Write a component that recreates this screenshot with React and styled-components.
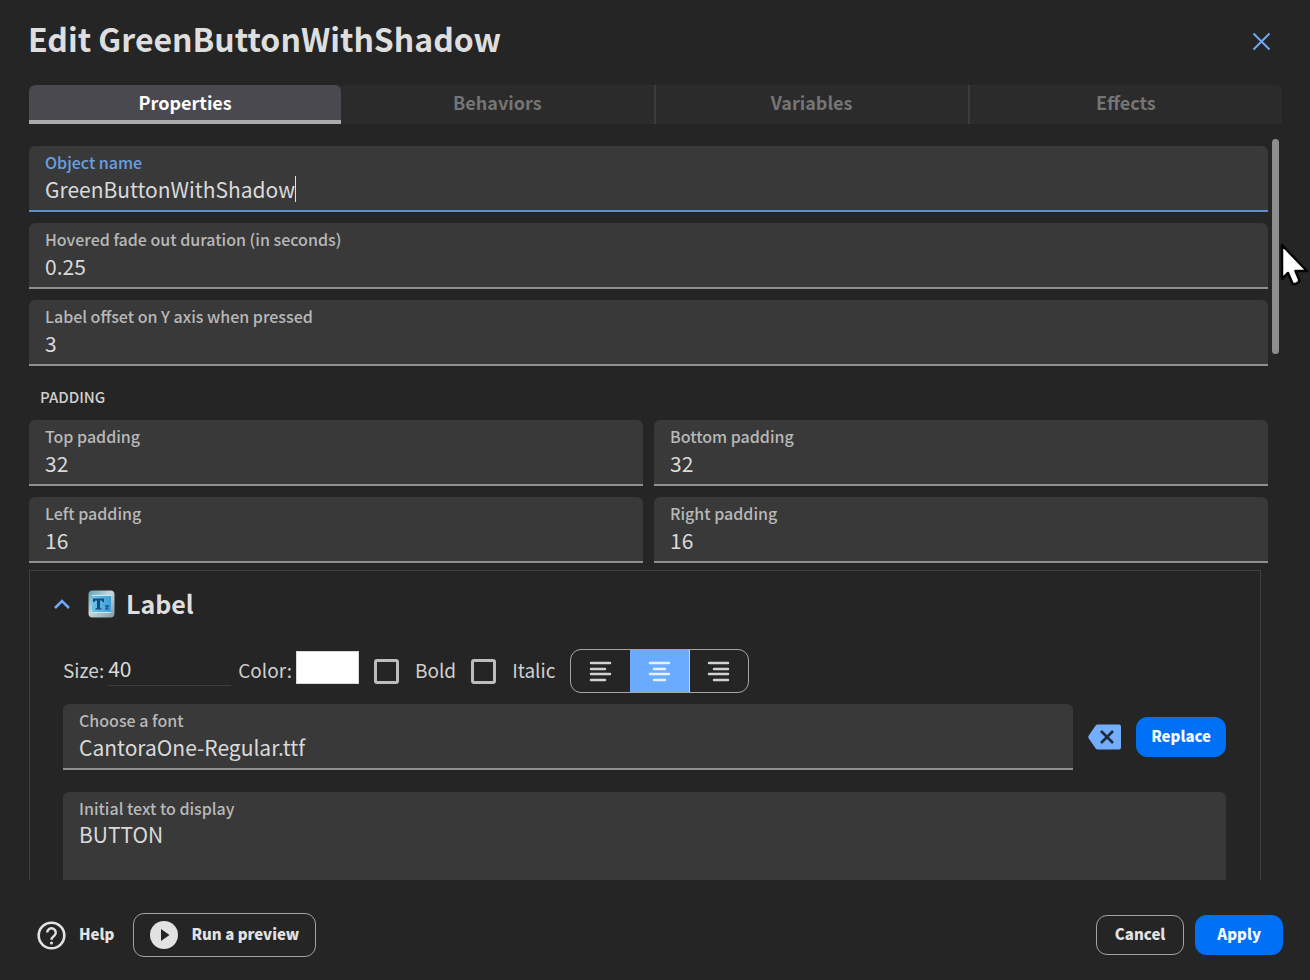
import React from 'react';
import styled, { createGlobalStyle, css } from 'styled-components';

const GlobalStyle = createGlobalStyle`
  *, *::before, *::after { box-sizing: border-box; }
  body { margin: 0; background: #252525; }
  body, button, input, textarea {
    font-family: "Noto Sans CJK SC", "Open Sans", sans-serif;
  }
`;

const Dialog = styled.main`
  display: flex;
  flex-direction: column;
  height: 100vh;
  background: #252525;
  color: #d9d9d9;
  overflow: hidden;
`;

const Header = styled.header`
  display: flex;
  align-items: center;
  justify-content: space-between;
  flex: none;
  height: 85px;
  padding: 0 36px 3px 28px;
`;

const Title = styled.h1`
  margin: 0;
  padding-bottom: 6px;
  font-size: 32px;
  line-height: 40px;
  font-weight: 700;
  color: #dedede;
`;

const CloseButton = styled.button`
  display: flex;
  padding: 0;
  border: 0;
  background: none;
  color: #6fa8f5;
`;

const Tabs = styled.div`
  display: flex;
  flex: none;
  height: 39px;
  margin: 0 28px 0 29px;
  border-radius: 6px 6px 0 0;
  overflow: hidden;
  background: #2b2b2b;
`;

const Tab = styled.button`
  flex: 1;
  padding: 0 0 5px;
  border: 0;
  border-right: 2px solid #3c3c3c;
  background: none;
  color: #757575;
  font-size: 18px;
  line-height: 24px;
  font-weight: 700;
  &:last-child { border-right: 0; }
  ${(p) => p.$active && css`
    padding-bottom: 1px;
    border-right: 0;
    border-bottom: 4px solid #acabac;
    border-radius: 6px 6px 0 0;
    background: #4a494f;
    color: #fff;
  `}
`;

const Body = styled.div`
  display: flex;
  flex: 1;
  gap: 4px;
  min-height: 0;
  margin: 15px 31px 0 29px;
`;

const Content = styled.div`
  display: flex;
  flex-direction: column;
  flex: 1;
  min-width: 0;
  overflow: hidden;
  padding-top: 7px;
`;

const ScrollThumb = styled.div`
  flex: none;
  width: 7px;
  height: 29%;
  border-radius: 4px;
  background: #8e8e8e;
`;

const Fields = styled.div`
  display: grid;
  flex: none;
  grid-template-columns: repeat(${(p) => p.$columns || 1}, 1fr);
  gap: 11px;
`;

const FieldBox = styled.label`
  display: flex;
  flex-direction: column;
  flex: ${(p) => (p.$multiline ? 'none' : 1)};
  min-width: 0;
  height: ${(p) => (p.$multiline ? 160 : 66)}px;
  padding: 4px 16px 0;
  border-radius: 6px 6px 0 0;
  border-bottom: 2px solid ${(p) => (p.$focused ? '#5c8fcc' : '#8f8f8f')};
  background: #393939;
`;

const FieldLabel = styled.span`
  font-size: 16px;
  line-height: 24px;
  font-weight: 500;
  color: ${(p) => (p.$focused ? '#6a9fe0' : '#b8b8b8')};
`;

const inputText = css`
  padding: 0;
  border: 0;
  outline: 0;
  background: none;
  color: #dadada;
  font-size: 21px;
  line-height: 30px;
`;

const TextInput = styled.input`
  ${inputText}
  width: 100%;
  height: 30px;
  ${(p) => p.$hug && css`
    width: auto;
    field-sizing: content;
    caret-color: transparent;
  `}
`;

const TextArea = styled.textarea`
  ${inputText}
  flex: 1;
  line-height: 28px;
  resize: none;
`;

const CaretRow = styled.span`
  display: flex;
  align-items: center;
`;

const Caret = styled.span`
  width: 1px;
  height: 26px;
  background: #e0e0e0;
`;

const SectionTitle = styled.h2`
  flex: none;
  margin: 19px 11px 11px;
  font-size: 15px;
  line-height: 24px;
  font-weight: 500;
  color: #cfcfcf;
`;

const Panel = styled.section`
  display: flex;
  flex-direction: column;
  flex: none;
  margin: 7px 7px 0 0;
  padding: 16px 34px 0 33px;
  border: 1px solid #404040;
`;

const PanelHeader = styled.div`
  display: flex;
  align-items: center;
  height: 34px;
  margin-left: -9px;
`;

const Collapse = styled.button`
  display: flex;
  padding: 0;
  border: 0;
  background: none;
  color: #6fa8f5;
`;

const PanelTitle = styled.h2`
  display: flex;
  align-items: center;
  gap: 11px;
  margin: 0 0 0 18px;
  font-size: 25px;
  line-height: 34px;
  font-weight: 700;
  color: #dedede;
`;

const FormatRow = styled.div`
  display: flex;
  align-items: center;
  height: 44px;
  margin: 28px 0 11px;
  font-size: 19px;
  line-height: 28px;
  color: #cfcfcf;
`;

const InlineLabel = styled.label`
  display: flex;
  align-items: center;
  gap: ${(p) => p.$gap || 4}px;
  height: 30px;
  margin-right: ${(p) => p.$after || 0}px;
`;

const LabelText = styled.span`
  padding-bottom: 3px;
`;

const SizeInput = styled.input`
  ${inputText}
  width: 123px;
  height: 32px;
  margin-bottom: 2px;
  padding-bottom: 4px;
  border-bottom: 1px solid #3d3d3d;
`;

const Swatch = styled.input`
  width: 63px;
  height: 33px;
  margin: 0 0 7px;
  padding: 0;
  border: 0;
  background: none;
  &::-webkit-color-swatch-wrapper { padding: 0; }
  &::-webkit-color-swatch { border: 1px solid #d8d8d8; border-radius: 0; }
`;

const Checkbox = styled.input`
  appearance: none;
  width: 25px;
  height: 25px;
  margin: 0;
  border: 3px solid #bdbdbd;
  border-radius: 3px;
`;

const AlignGroup = styled.div`
  display: flex;
  width: 179px;
  height: 44px;
  border: 1px solid #a5a5a5;
  border-radius: 11px;
  overflow: hidden;
`;

const AlignButton = styled.button`
  display: flex;
  align-items: center;
  justify-content: center;
  flex: 1;
  padding: 0;
  border: 0;
  background: ${(p) => (p.$active ? '#6aabff' : 'none')};
  color: ${(p) => (p.$active ? '#e8f1ff' : '#d2d2d2')};
  box-shadow: ${(p) => (p.$active ? '1px 0 0 #d5d5d5' : 'none')};
`;

const FontRow = styled.div`
  display: flex;
  align-items: center;
  margin-bottom: 22px;
`;

const ClearButton = styled.button`
  display: flex;
  margin: 0 15px;
  padding: 0;
  border: 0;
  background: none;
`;

const Button = styled.button`
  display: flex;
  align-items: center;
  justify-content: center;
  gap: 13px;
  height: ${(p) => (p.$large ? 44 : 40)}px;
  padding: 0 ${(p) => p.$pad || 14}px;
  border: 1px solid #a3a3a3;
  border-radius: 11px;
  background: none;
  color: #e2e2e2;
  white-space: nowrap;
  ${(p) => p.$primary && css`
    border-color: #0070f5;
    background: #0070f5;
    color: #f4f8ff;
  `}
  ${(p) => p.$plain && css`
    border-color: transparent;
  `}
`;

const ButtonText = styled.span`
  padding-bottom: 3px;
  font-size: 15px;
  line-height: 24px;
  font-weight: 900;
`;

const Footer = styled.footer`
  display: flex;
  align-items: center;
  justify-content: space-between;
  flex: none;
  height: 100px;
  padding: 10px 27px 0 29px;
`;

const Actions = styled.div`
  display: flex;
  align-items: center;
  gap: ${(p) => p.$gap}px;
`;

const Pointer = styled.svg`
  position: absolute;
  top: 242px;
  right: 0;
  pointer-events: none;
`;

function Field({ label, value, focused }) {
  return (
    <FieldBox $focused={focused}>
      <FieldLabel $focused={focused}>{label}</FieldLabel>
      {focused ? (
        <CaretRow>
          <TextInput $hug defaultValue={value} />
          <Caret />
        </CaretRow>
      ) : (
        <TextInput defaultValue={value} />
      )}
    </FieldBox>
  );
}

const alignLines = {
  left: ['M2 2h19', 'M2 8h14', 'M2 13h19', 'M2 19h14'],
  center: ['M2 2h19', 'M6 8h11', 'M2 13h19', 'M6 19h11'],
  right: ['M2 2h19', 'M7 8h14', 'M2 13h19', 'M7 19h14'],
};

function AlignIcon({ kind }) {
  return (
    <svg width="23" height="21" viewBox="0 0 23 21" fill="none" stroke="currentColor" strokeWidth="2.500" strokeLinecap="round">
      {alignLines[kind].map((d) => <path key={d} d={d} />)}
    </svg>
  );
}

function TextObjectIcon() {
  return (
    <svg width="27" height="28" viewBox="0 0 27 28">
      <defs>
        <linearGradient id="frame" x1="0" y1="0" x2="1" y2="1">
          <stop offset="0" stopColor="#5d9fb4" />
          <stop offset="0.45" stopColor="#c6d7da" />
          <stop offset="1" stopColor="#7f9ba0" />
        </linearGradient>
        <linearGradient id="face" x1="0" y1="0" x2="1" y2="0">
          <stop offset="0" stopColor="#6cc3e8" />
          <stop offset="1" stopColor="#3d9fd6" />
        </linearGradient>
      </defs>
      <rect x="0.5" y="0.5" width="26" height="27" rx="4" fill="url(#frame)" />
      <rect x="4" y="5" width="19" height="18" fill="url(#face)" />
      <path d="M4 5.500h19M4 22.500h19" stroke="#c3ecfa" />
      <path d="M5 8.500h11v3.500h-1.500l-.8-1.500h-1.700v7.500l1.500.5v1h-6v-1l1.500-.5v-7.500H7.300l-.8 1.500H5z" fill="#17497f" />
      <path d="M17 15h4v1.500l-1 .5v1.500h1v1h-4v-1l1-.5v-1.500h-1z" fill="#1f5f9c" />
    </svg>
  );
}

export default function App() {
  return (
    <Dialog>
      <GlobalStyle />
      <Header>
        <Title>Edit GreenButtonWithShadow</Title>
        <CloseButton aria-label="Close">
          <svg width="25" height="25" viewBox="0 0 25 25" fill="none" stroke="currentColor" strokeWidth="2">
            <path d="M4.500 4.500l16 16M20.500 4.500l-16 16" />
          </svg>
        </CloseButton>
      </Header>
      <Tabs role="tablist">
        <Tab role="tab" aria-selected="true" $active>Properties</Tab>
        <Tab role="tab">Behaviors</Tab>
        <Tab role="tab">Variables</Tab>
        <Tab role="tab">Effects</Tab>
      </Tabs>
      <Body>
        <Content>
          <Fields>
            <Field label="Object name" value="GreenButtonWithShadow" focused />
            <Field label="Hovered fade out duration (in seconds)" value="0.25" />
            <Field label="Label offset on Y axis when pressed" value="3" />
          </Fields>
          <SectionTitle>PADDING</SectionTitle>
          <Fields $columns={2}>
            <Field label="Top padding" value="32" />
            <Field label="Bottom padding" value="32" />
            <Field label="Left padding" value="16" />
            <Field label="Right padding" value="16" />
          </Fields>
          <Panel>
            <PanelHeader>
              <Collapse aria-label="Collapse Label">
                <svg width="16" height="12" viewBox="0 0 16 12" fill="none" stroke="currentColor" strokeWidth="2.600">
                  <path d="M1 10l7-7 7 7" />
                </svg>
              </Collapse>
              <PanelTitle><TextObjectIcon /><LabelText>Label</LabelText></PanelTitle>
            </PanelHeader>
            <FormatRow>
              <InlineLabel $after={7}><LabelText>Size:</LabelText><SizeInput defaultValue="40" /></InlineLabel>
              <InlineLabel $after={15}><LabelText>Color:</LabelText><Swatch type="color" defaultValue="#ffffff" /></InlineLabel>
              <InlineLabel $gap={16} $after={15}><Checkbox type="checkbox" /><LabelText>Bold</LabelText></InlineLabel>
              <InlineLabel $gap={16} $after={15}><Checkbox type="checkbox" /><LabelText>Italic</LabelText></InlineLabel>
              <AlignGroup>
                <AlignButton aria-label="Align left"><AlignIcon kind="left" /></AlignButton>
                <AlignButton aria-label="Align center" $active><AlignIcon kind="center" /></AlignButton>
                <AlignButton aria-label="Align right"><AlignIcon kind="right" /></AlignButton>
              </AlignGroup>
            </FormatRow>
            <FontRow>
              <Field label="Choose a font" value="CantoraOne-Regular.ttf" />
              <ClearButton aria-label="Clear font">
                <svg width="33" height="26" viewBox="0 0 33 26">
                  <path d="M10 .5h21a2 2 0 0 1 2 2v21a2 2 0 0 1-2 2H10a3 3 0 0 1-2.500-1.300L.8 14.500a2.500 2.500 0 0 1 0-3L7.500 1.800A3 3 0 0 1 10 .5z" fill="#72aefc" />
                  <path d="M13 7l12 12M25 7L13 19" stroke="#222a36" strokeWidth="2.600" />
                </svg>
              </ClearButton>
              <Button $primary><ButtonText>Replace</ButtonText></Button>
            </FontRow>
            <FieldBox $multiline>
              <FieldLabel>Initial text to display</FieldLabel>
              <TextArea defaultValue="BUTTON" />
            </FieldBox>
          </Panel>
        </Content>
        <ScrollThumb />
      </Body>
      <Footer>
        <Actions $gap={11}>
          <Button $plain $pad={7}>
            <svg width="29" height="29" viewBox="0 0 29 29" fill="none" stroke="currentColor">
              <circle cx="14.500" cy="14.500" r="12.800" strokeWidth="2.600" />
              <path d="M10.200 11.600a4.300 4.300 0 1 1 7.200 3.100c-1.600 1.400-2.900 2-2.900 4" strokeWidth="2.400" />
              <circle cx="14.500" cy="22" r="1.500" fill="currentColor" stroke="none" />
            </svg>
            <ButtonText>Help</ButtonText>
          </Button>
          <Button $large $pad={16}>
            <svg width="28" height="28" viewBox="0 0 28 28">
              <circle cx="14" cy="14" r="14" fill="currentColor" />
              <path d="M11 8v12l8.500-6z" fill="#252525" />
            </svg>
            <ButtonText>Run a preview</ButtonText>
          </Button>
        </Actions>
        <Actions $gap={11}>
          <Button $pad={18}><ButtonText>Cancel</ButtonText></Button>
          <Button $primary $pad={21}><ButtonText>Apply</ButtonText></Button>
        </Actions>
      </Footer>
      <Pointer width="30" height="46" viewBox="0 0 30 46" aria-hidden="true">
        <path d="M2 3v34l6-6 4.500 10.500c2 1.500 6 0 7-3L15.500 29H27z" fill="#fff" stroke="#050505" strokeWidth="2.500" strokeLinejoin="round" />
      </Pointer>
    </Dialog>
  );
}
